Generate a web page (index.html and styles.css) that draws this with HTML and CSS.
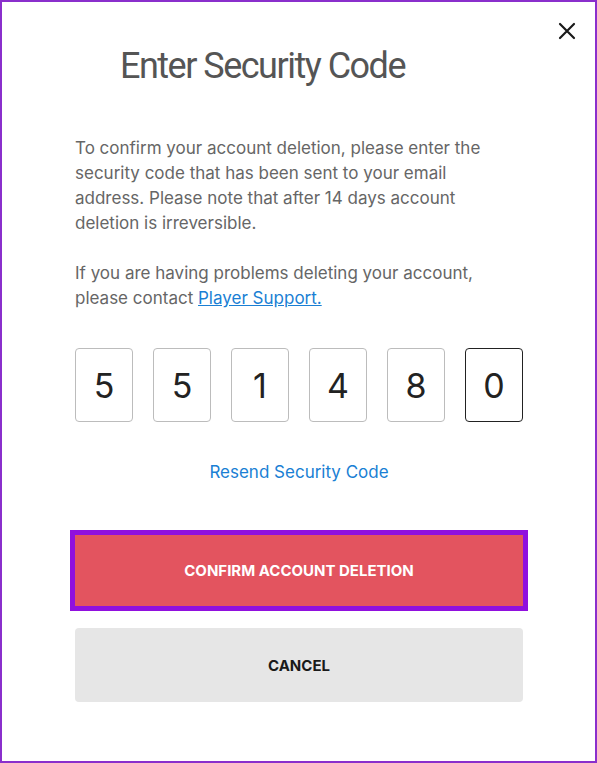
FILE: index.html
```html
<!DOCTYPE html>
<html lang="en">
<head>
    <meta charset="UTF-8">
    <meta name="viewport" content="width=device-width, initial-scale=1.0">
    <title>Enter Security Code</title>
    <link rel="stylesheet" href="styles.css">
</head>
<body>
<div class="frame">
    <div class="header">
        <h1 class="title">Enter Security Code</h1>
        <button class="close" aria-label="Close">
            <svg width="18" height="18" viewBox="0 0 18 18">
                <path d="M2 2 L16 16 M16 2 L2 16" stroke="#1a1a1a" stroke-width="2.2" stroke-linecap="round"/>
            </svg>
        </button>
    </div>

    <div class="content">
        <p class="text">To confirm your account deletion, please enter the security code that has been sent to your email address. Please note that after 14 days account deletion is irreversible.</p>
        <p class="text">If you are having problems deleting your account, please contact <a href="#" class="link">Player Support.</a></p>

        <div class="code">
            <div class="digit">5</div>
            <div class="digit">5</div>
            <div class="digit">1</div>
            <div class="digit">4</div>
            <div class="digit">8</div>
            <div class="digit focus">0</div>
        </div>

        <div class="resend"><a href="#">Resend Security Code</a></div>

        <button class="btn confirm">CONFIRM ACCOUNT DELETION</button>
        <button class="btn cancel">CANCEL</button>
    </div>
</div>
</body>
</html>
```

FILE: styles.css
```css
* {
    box-sizing: border-box;
    margin: 0;
    padding: 0;
}

body {
    font-family: Inter, "Noto Sans", sans-serif;
    background: white;
}

.frame {
    width: 597px;
    height: 763px;
    border: 2px solid #8a2fcc;
    overflow: hidden;
}

.header {
    display: flex;
    align-items: flex-start;
}

.title {
    flex: 1;
    text-align: center;
    font-family: Roboto, sans-serif;
    font-weight: 400;
    font-size: 36px;
    letter-spacing: -1.5px;
    color: #555;
    padding-top: 42px;
    padding-right: 16px;
    line-height: 44px;
}

.close {
    width: 56px;
    padding-top: 20px;
    background: none;
    border: none;
    cursor: pointer;
    display: flex;
    justify-content: center;
}

.content {
    width: 448px;
    margin: 0 0 0 73px;
    padding-top: 47px;
}

.text {
    max-width: 440px;
    font-size: 17px;
    line-height: 25px;
    color: #666;
    margin-bottom: 25px;
}

.text:first-child {
    margin-top: 1px;
}

.link {
    color: #1a7fd4;
}

.code {
    display: flex;
    gap: 20px;
    margin-top: 37px;
}

.digit {
    width: 58px;
    height: 74px;
    border: 1px solid #bcbcbc;
    border-radius: 4px;
    display: flex;
    align-items: center;
    justify-content: center;
    font-size: 34px;
    color: #222;
}

.digit.focus {
    border-color: #222;
}

.resend {
    text-align: center;
    margin-top: 40px;
    font-size: 17px;
}

.resend a {
    color: #1a7fd4;
    text-decoration: none;
}

.btn {
    display: block;
    width: 100%;
    border: none;
    font-family: inherit;
    font-weight: 700;
    font-size: 15px;
    cursor: pointer;
}

.confirm {
    height: 71px;
    margin-top: 53px;
    background: #e3545f;
    color: white;
    outline: 5px solid #9010de;
}

.cancel {
    height: 74px;
    margin-top: 22px;
    background: #e6e6e6;
    color: #1a1a1a;
    border-radius: 4px;
}
```
